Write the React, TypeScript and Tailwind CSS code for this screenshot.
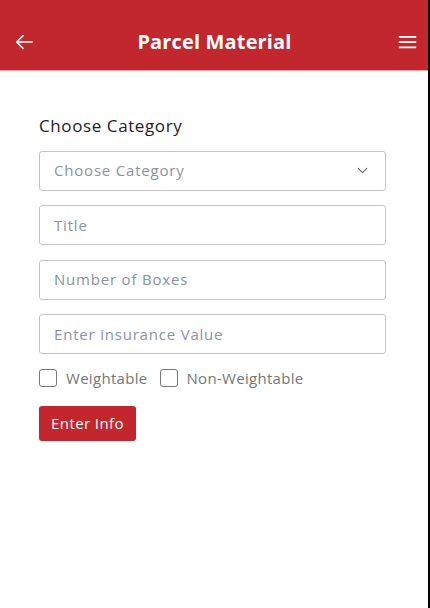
import { ChevronDown } from "lucide-react";

const fields = ["Title", "Number of Boxes", "Enter insurance Value"];

export default function App() {
  return (
    <div className="flex h-[608px] w-[430px] bg-black font-['Open_Sans',sans-serif]">
      <div className="flex w-[428px] flex-col bg-white">
        {/* Header */}
        <header className="flex h-[71px] items-center justify-between border-b border-[#e8a3a6] bg-[#c1272d] px-[13px] pt-[13px] text-white">
          <svg viewBox="0 0 24 24" className="h-[22px] w-[22px]" fill="none" stroke="currentColor">
            <path strokeWidth="1.8" strokeLinecap="round" strokeLinejoin="round" d="M21 12H4M11 5l-7 7 7 7" />
          </svg>
          <h1 className="mr-[4px] text-[20px] font-bold tracking-[0.15px]">Parcel Material</h1>
          <svg viewBox="0 0 20 16" className="mr-[-2px] h-[14px] w-[19px]" fill="none" stroke="currentColor">
            <path strokeWidth="2" d="M0 2h20M0 8h20M0 14h20" />
          </svg>
        </header>

        {/* Form */}
        <div className="flex flex-col pl-[39px] pr-[42px] pt-[42px]">
          <p className="text-[17px] font-medium tracking-[0.6px] text-[#222]">Choose Category</p>
          <div className="mt-[12px] flex h-[40px] items-center justify-between rounded-[3px] border border-[#c4c4c4] px-[14px] text-[15px] tracking-[0.8px] text-[#8a93a3]">
            <span>Choose Category</span>
            <ChevronDown className="h-[17px] w-[17px] text-[#666]" strokeWidth={1.5} />
          </div>
          {fields.map((f) => (
            <div
              key={f}
              className="mt-[14.5px] flex h-[40px] items-center rounded-[3px] border border-[#c4c4c4] px-[14px] text-[15px] tracking-[0.8px] text-[#8a93a3]"
            >
              {f}
            </div>
          ))}

          <div className="mt-[13px] flex items-center text-[15px] tracking-[0.3px] text-[#777]">
            <span className="h-[18px] w-[18px] rounded-[3px] border-[1.5px] border-[#777]" />
            <span className="ml-[9px]">Weightable</span>
            <span className="ml-[13px] h-[18px] w-[18px] rounded-[3px] border-[1.5px] border-[#777]" />
            <span className="ml-[8px]">Non-Weightable</span>
          </div>

          <button
            type="button"
            className="mt-[16px] h-[35px] w-[97px] rounded-[3px] bg-[#c1272d] text-[15px] tracking-[0.4px] text-white"
          >
            Enter Info
          </button>
        </div>
      </div>
    </div>
  );
}
